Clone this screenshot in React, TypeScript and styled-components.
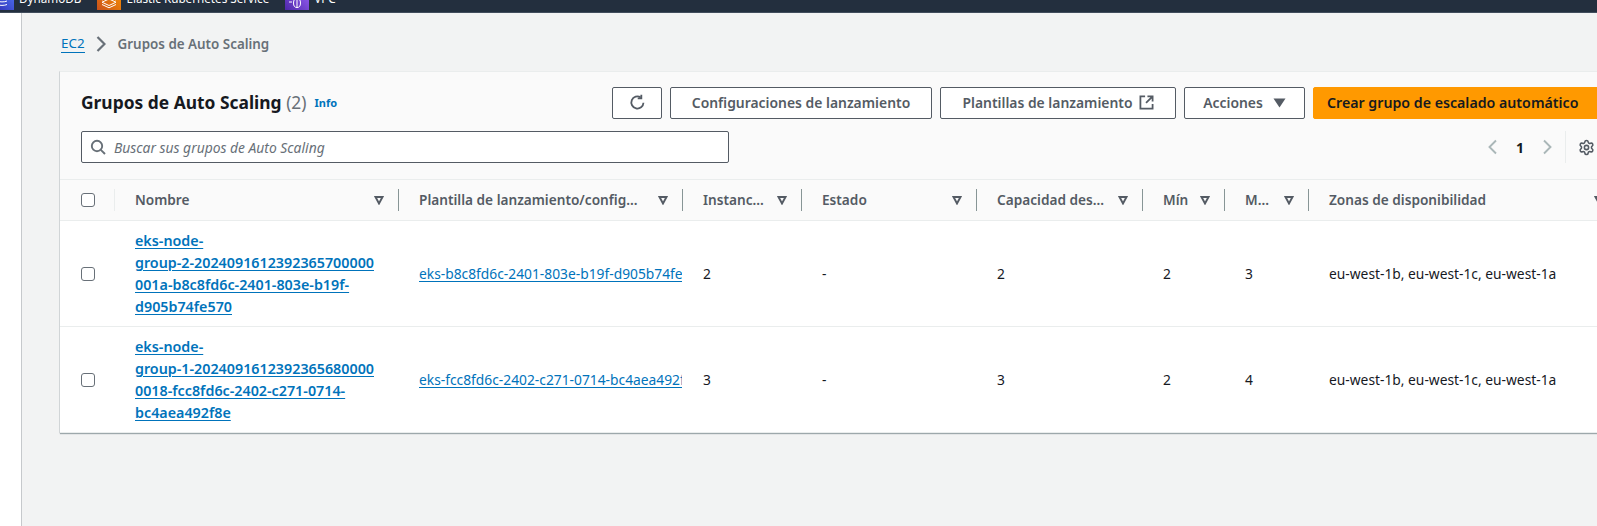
import React from "react";
import styled, { createGlobalStyle } from "styled-components";
import { Settings } from "lucide-react";

const GlobalStyle = createGlobalStyle`
  html, body {
    margin: 0;
    padding: 0;
    height: 526px;
    overflow: hidden;
    background: #f2f3f3;
    font-family: "Noto Sans", "Open Sans", sans-serif;
    font-size: 13.8px;
    color: #16191f;
  }
`;

interface Column {
  label: string;
  width: number;
  divider: boolean;
}

const columns: Column[] = [
  { label: "Nombre", width: 284, divider: true },
  { label: "Plantilla de lanzamiento/config...", width: 284, divider: true },
  { label: "Instanc...", width: 119, divider: true },
  { label: "Estado", width: 175, divider: true },
  { label: "Capacidad des...", width: 166, divider: true },
  { label: "Mín", width: 82, divider: true },
  { label: "M...", width: 84, divider: true },
  { label: "Zonas de disponibilidad", width: 310, divider: false },
];

const rows = [
  {
    name: ["eks-node-", "group-2-2024091612392365700000", "001a-b8c8fd6c-2401-803e-b19f-", "d905b74fe570"],
    template: "eks-b8c8fd6c-2401-803e-b19f-d905b74fe570",
    instances: "2",
    desired: "2",
    min: "2",
    max: "3",
  },
  {
    name: ["eks-node-", "group-1-2024091612392365680000", "0018-fcc8fd6c-2402-c271-0714-", "bc4aea492f8e"],
    template: "eks-fcc8fd6c-2402-c271-0714-bc4aea492f8e",
    instances: "3",
    desired: "3",
    min: "2",
    max: "4",
  },
];

const ServiceIcon: React.FC<{ id: string; from: string; to: string; children?: React.ReactNode }> = ({
  id,
  from,
  to,
  children,
}) => (
  <svg width="24" height="24" viewBox="0 0 24 24" style={{ flex: "none" }}>
    <defs>
      <linearGradient id={id} x1="0" y1="1" x2="1" y2="0">
        <stop offset="0" stopColor={from} />
        <stop offset="1" stopColor={to} />
      </linearGradient>
    </defs>
    <rect width="24" height="24" fill={`url(#${id})`} />
    {children}
  </svg>
);

const App: React.FC = () => {
  return (
    <>
      <GlobalStyle />
      <Page>
        <TopBar>
          <ServiceStrip>
            <Service>
              <ServiceIcon id="dynamo" from="#2e27ad" to="#527fff">
                <path d="M7 18.5c2.5 1.2 7.5 1.2 10 0M7 15c2.5 1.2 7.5 1.2 10 0" fill="none" stroke="#fff" strokeWidth="1" />
              </ServiceIcon>
              DynamoDB
            </Service>
            <Service>
              <ServiceIcon id="eks" from="#c8511b" to="#ff9900">
                <path
                  d="M12 13l7 3.2-7 3.3-7-3.3zM5 18.5l7 3.3 7-3.3M5 14l7-3.2 7 3.2"
                  fill="none"
                  stroke="#fff"
                  strokeWidth="1"
                />
              </ServiceIcon>
              Elastic Kubernetes Service
            </Service>
            <Service>
              <ServiceIcon id="vpc" from="#4d27a8" to="#a166ff">
                <ellipse cx="12" cy="17" rx="3.5" ry="4.5" fill="none" stroke="#fff" strokeWidth="1" />
                <path d="M12 12v10M4 16h3" fill="none" stroke="#fff" strokeWidth="1" />
              </ServiceIcon>
              VPC
            </Service>
          </ServiceStrip>
        </TopBar>
        <Body>
          <SideNav />
          <Content>
            <Breadcrumb>
              <CrumbLink>EC2</CrumbLink>
              <CrumbChevron width="10" height="16" viewBox="0 0 10 16" fill="none" stroke="#687078" strokeWidth="2.2">
                <path d="M1.5 1l7 7-7 7" />
              </CrumbChevron>
              <CrumbCurrent>Grupos de Auto Scaling</CrumbCurrent>
            </Breadcrumb>
            <Card>
              <CardHeader>
                <HeaderRow>
                  <Title>
                    Grupos de Auto Scaling <Count>(2)</Count>
                  </Title>
                  <InfoLink>Info</InfoLink>
                  <Actions>
                    <Button $width={50} $gap={0}>
                      <svg width="17" height="17" viewBox="0 0 16 16" fill="none" stroke="#545b64" strokeWidth="1.7">
                        <path d="M13.6 8.2A5.7 5.7 0 1 1 11 3.2" />
                        <path d="M11.6 0.8v3.4H8.2" />
                      </svg>
                    </Button>
                    <Button $width={262} $gap={0}>
                      Configuraciones de lanzamiento
                    </Button>
                    <Button $width={236} $gap={6}>
                      Plantillas de lanzamiento
                      <svg width="15" height="15" viewBox="0 0 16 16" fill="none" stroke="#545b64" strokeWidth="1.9">
                        <path d="M6.5 1.5H1.5v13h13v-5" />
                        <path d="M9 1.5h5.5V7M14.5 1.5L7.5 8.5" />
                      </svg>
                    </Button>
                    <Button $width={121} $gap={10}>
                      Acciones
                      <svg width="13" height="10" viewBox="0 0 13 10" fill="#545b64">
                        <path d="M0.5 0.5h12L6.5 9.5z" />
                      </svg>
                    </Button>
                    <PrimaryButton>Crear grupo de escalado automático</PrimaryButton>
                  </Actions>
                </HeaderRow>
                <FilterRow>
                  <SearchBox>
                    <svg width="16" height="16" viewBox="0 0 16 16" fill="none" stroke="#687078" strokeWidth="1.9">
                      <circle cx="7" cy="7" r="5.2" />
                      <path d="M10.8 10.8l4.2 4.2" />
                    </svg>
                    <SearchText>Buscar sus grupos de Auto Scaling</SearchText>
                  </SearchBox>
                  <Pager>
                    <svg width="12" height="18" viewBox="0 0 12 18" fill="none" stroke="#aab7b8" strokeWidth="1.9">
                      <path d="M10 2.5L3.5 9l6.5 6.5" />
                    </svg>
                    <PageNumber>1</PageNumber>
                    <svg width="12" height="18" viewBox="0 0 12 18" fill="none" stroke="#aab7b8" strokeWidth="1.9">
                      <path d="M2 2.5L8.5 9 2 15.5" />
                    </svg>
                    <PagerDivider />
                    <Settings size={17} color="#545b64" strokeWidth={2.2} />
                  </Pager>
                </FilterRow>
              </CardHeader>
              <HeadRow>
                <CheckCell>
                  <Checkbox />
                </CheckCell>
                {columns.map((column) => (
                  <HeadCell key={column.label} $width={column.width} $divider={column.divider}>
                    <HeadLabel>{column.label}</HeadLabel>
                    <svg width="10" height="9" viewBox="0 0 10 9" fill="none" stroke="#545b64" strokeWidth="1.9">
                      <path d="M1.5 1h7L5 7.5z" />
                    </svg>
                  </HeadCell>
                ))}
              </HeadRow>
              {rows.map((row) => (
                <DataRow key={row.template}>
                  <RowCheckCell>
                    <Checkbox />
                  </RowCheckCell>
                  <NameCell $width={284}>
                    {row.name.map((line) => (
                      <NameLine key={line}>
                        <NameLink>{line}</NameLink>
                      </NameLine>
                    ))}
                  </NameCell>
                  <Cell $width={284}>
                    <TemplateLink>{row.template}</TemplateLink>
                  </Cell>
                  <Cell $width={119}>{row.instances}</Cell>
                  <Cell $width={175}>-</Cell>
                  <Cell $width={166}>{row.desired}</Cell>
                  <Cell $width={82}>{row.min}</Cell>
                  <Cell $width={84}>{row.max}</Cell>
                  <Cell $width={310}>eu-west-1b, eu-west-1c, eu-west-1a</Cell>
                </DataRow>
              ))}
            </Card>
          </Content>
        </Body>
      </Page>
    </>
  );
};

export default App;

const Page = styled.div`
  display: flex;
  flex-direction: column;
  height: 526px;
  width: 1597px;
  overflow: hidden;
`;

const TopBar = styled.div`
  flex: none;
  box-sizing: border-box;
  height: 13px;
  overflow: hidden;
  background: #232f3e;
  border-bottom: 1px solid #414d5c;
  color: #fff;
  font-size: 11.7px;
`;

/* the favourites bar is scrolled, so only its lower edge shows */
const ServiceStrip = styled.div`
  display: flex;
  align-items: center;
  gap: 16px;
  height: 24px;
  margin: -14px 0 0 -10px;
`;

const Service = styled.div`
  display: flex;
  align-items: center;
  gap: 5px;
  white-space: nowrap;
`;

const Body = styled.div`
  display: flex;
  flex: 1;
  min-height: 0;
`;

const SideNav = styled.div`
  flex: none;
  box-sizing: border-box;
  width: 22px;
  background: #fff;
  border-right: 1px solid #c6c9cc;
`;

const Content = styled.div`
  flex: 1;
  min-width: 0;
  padding: 21px 0 0 38px;
  overflow: hidden;
`;

const Breadcrumb = styled.div`
  display: flex;
  align-items: center;
  height: 20px;
  padding-left: 1px;
  font-size: 13.4px;
  font-weight: 600;
`;

const CrumbLink = styled.a`
  color: #0073bb;
  font-weight: 400;
  font-size: 13.4px;
  line-height: 17px;
  border-bottom: 1px solid #0073bb;
`;

const CrumbChevron = styled.svg`
  margin: 0 12px 0 11px;
`;

const CrumbCurrent = styled.span`
  color: #687078;
`;

const Card = styled.div`
  width: 1600px;
  margin-top: 17px;
  background: #fff;
  box-shadow: 0 1px 1px 0 rgba(0, 28, 36, 0.35), -1px 0 0 0 rgba(0, 28, 36, 0.08);
`;

const CardHeader = styled.div`
  background: #fafafa;
  border-top: 1px solid #eaeded;
  padding: 15px 0 16px 21px;
`;

const HeaderRow = styled.div`
  display: flex;
  align-items: center;
  height: 32px;
`;

const Title = styled.h1`
  margin: 0 0 3px;
  font-size: 17.4px;
  font-weight: 700;
  color: #16191f;
`;

const Count = styled.span`
  font-weight: 400;
  color: #687078;
`;

const InfoLink = styled.a`
  margin: 0 0 1px 8px;
  font-size: 11px;
  font-weight: 700;
  color: #0073bb;
`;

const Actions = styled.div`
  display: flex;
  gap: 8px;
  width: 1048px;
  margin-left: auto;
`;

const Button = styled.div<{ $width: number; $gap: number }>`
  display: flex;
  align-items: center;
  justify-content: center;
  gap: ${(p) => p.$gap}px;
  box-sizing: border-box;
  width: ${(p) => p.$width}px;
  height: 32px;
  padding-bottom: 1px;
  flex: none;
  background: #fff;
  border: 1px solid #545b64;
  border-radius: 2px;
  font-weight: 600;
  font-size: 13.9px;
  color: #545b64;
  white-space: nowrap;
`;

const PrimaryButton = styled(Button).attrs({ $width: 347, $gap: 0 })`
  justify-content: flex-start;
  padding-left: 13px;
  background: #ff9900;
  border-color: #ff9900;
  color: #16191f;
  font-size: 14.2px;
`;

const FilterRow = styled.div`
  display: flex;
  align-items: center;
  margin-top: 12px;
  height: 32px;
`;

const SearchBox = styled.div`
  display: flex;
  align-items: center;
  gap: 8px;
  box-sizing: border-box;
  width: 648px;
  height: 32px;
  padding: 0 8px;
  background: #fff;
  border: 1px solid #545b64;
  border-radius: 2px;
`;

const SearchText = styled.span`
  font-style: italic;
  font-size: 13.85px;
  color: #687078;
`;

const Pager = styled.div`
  display: flex;
  align-items: center;
  margin-left: 757px;
  height: 32px;
`;

const PageNumber = styled.span`
  margin: 0 18px;
  font-weight: 700;
  font-size: 14px;
`;

const PagerDivider = styled.span`
  width: 1px;
  height: 32px;
  margin: 0 12px 0 11px;
  background: #eaeded;
`;

const HeadRow = styled.div`
  display: flex;
  align-items: center;
  box-sizing: border-box;
  height: 42px;
  background: #fafafa;
  border-top: 1px solid #eaeded;
  border-bottom: 1px solid #eaeded;
`;

const CheckCell = styled.div`
  display: flex;
  align-items: center;
  flex: none;
  box-sizing: border-box;
  width: 55px;
  height: 22px;
  padding-left: 21px;
  border-right: 1px solid #eaeded;
`;

const RowCheckCell = styled(CheckCell)`
  border-right: none;
`;

const Checkbox = styled.span`
  display: block;
  box-sizing: border-box;
  width: 14px;
  height: 14px;
  background: #fff;
  border: 1px solid #687078;
  border-radius: 3px;
`;

const HeadCell = styled.div<{ $width: number; $divider: boolean }>`
  display: flex;
  align-items: center;
  justify-content: space-between;
  flex: none;
  box-sizing: border-box;
  width: ${(p) => p.$width}px;
  height: 22px;
  padding: 0 14px 0 20px;
  border-right: 1px solid ${(p) => (p.$divider ? "#879596" : "transparent")};
`;

const HeadLabel = styled.span`
  margin-bottom: 1px;
  font-weight: 600;
  font-size: 13.65px;
  color: #545b64;
  white-space: nowrap;
`;

const DataRow = styled.div`
  display: flex;
  align-items: center;
  border-bottom: 1px solid #eaeded;
`;

const Cell = styled.div<{ $width: number }>`
  flex: none;
  box-sizing: border-box;
  width: ${(p) => p.$width}px;
  padding-left: 20px;
  font-size: 13.8px;
  white-space: nowrap;
  overflow: hidden;
`;

const NameCell = styled(Cell)`
  padding-top: 9px;
  padding-bottom: 8px;
`;

const NameLine = styled.div`
  height: 22px;
  line-height: 21px;
`;

const NameLink = styled.a`
  font-size: 14.3px;
  font-weight: 600;
  color: #0073bb;
  text-decoration: underline;
  text-decoration-thickness: 1px;
  text-underline-offset: 2px;
`;

const TemplateLink = styled.a`
  display: block;
  width: 263px;
  overflow: hidden;
  color: #0073bb;
  text-decoration: underline;
  text-decoration-thickness: 1px;
  text-underline-offset: 2px;
`;
